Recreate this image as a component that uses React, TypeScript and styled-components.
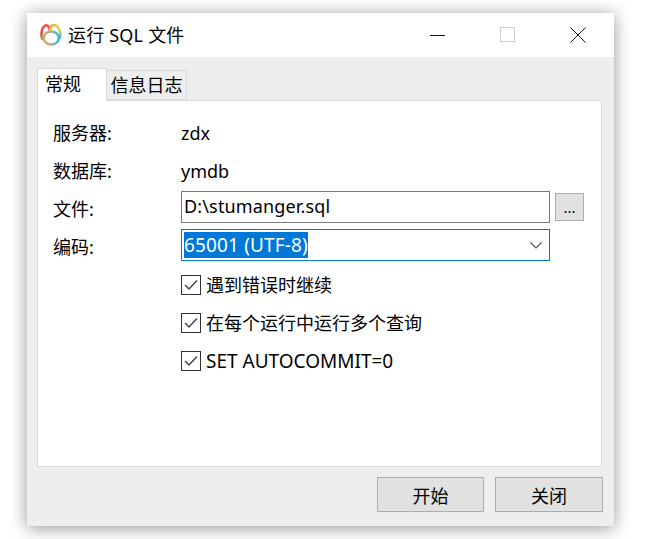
import React from 'react';
import styled, { createGlobalStyle } from 'styled-components';

const GlobalStyle = createGlobalStyle`
    html, body {
        margin: 0;
        padding: 0;
        background: #fff;
        font-family: "Noto Sans", "Noto Sans CJK SC", sans-serif;
    }
`;

// rainbow logo: two lobes sitting on a ring
const AppIcon = () => (
    <svg width="24" height="24" viewBox="0 0 24 24" fill="none" strokeWidth="2.5" strokeLinecap="round">
        <defs>
            <linearGradient id="lobeLeft" x1="0" y1="0" x2="0" y2="1">
                <stop offset="0" stopColor="#f0584a" />
                <stop offset="0.6" stopColor="#e8413f" />
                <stop offset="1" stopColor="#5fbf7a" />
            </linearGradient>
            <linearGradient id="lobeRight" x1="0" y1="0" x2="1" y2="1">
                <stop offset="0" stopColor="#f0a030" />
                <stop offset="0.6" stopColor="#d8d860" />
                <stop offset="1" stopColor="#4fc4c0" />
            </linearGradient>
            <linearGradient id="ring" x1="0" y1="0" x2="1" y2="0">
                <stop offset="0" stopColor="#d9a860" />
                <stop offset="0.5" stopColor="#a8b090" />
                <stop offset="1" stopColor="#35b4e4" />
            </linearGradient>
        </defs>
        <path d="M3 16 C1.5 10 3 4 6.5 2.5 C9 1.8 10.5 4 10.8 8" stroke="url(#lobeLeft)" />
        <path d="M10.8 8 C11 4 12.8 1.5 15.5 2 C19.5 3 22.5 9 21 15" stroke="url(#lobeRight)" />
        <ellipse cx="12.2" cy="15" rx="7.6" ry="6.6" stroke="url(#ring)" />
    </svg>
);

const CheckMark = () => (
    <svg width="14" height="12" viewBox="0 0 14 12" fill="none">
        <path d="M1 6 L5 10 L13 1.5" stroke="#444" strokeWidth="1.5" />
    </svg>
);

const options = [
    { text: '遇到错误时继续', latin: false },
    { text: '在每个运行中运行多个查询', latin: false },
    { text: 'SET AUTOCOMMIT=0', latin: true },
];

const App = (): JSX.Element => {
    return (
        <>
            <GlobalStyle />
            <Page>
                <Window>
                    <TitleBar>
                        <TitleLeft>
                            <AppIcon />
                            <TitleText>运行 SQL 文件</TitleText>
                        </TitleLeft>
                        <WindowControls>
                            <ControlButton>
                                <svg width="16" height="16" viewBox="0 0 16 16">
                                    <path d="M0 8.5 H15" stroke="#111" strokeWidth="1" />
                                </svg>
                            </ControlButton>
                            <ControlButton>
                                <svg width="16" height="16" viewBox="0 0 16 16" fill="none">
                                    <rect x="0.5" y="0.5" width="14" height="14" stroke="#ccc" strokeWidth="1" />
                                </svg>
                            </ControlButton>
                            <ControlButton>
                                <svg width="16" height="16" viewBox="0 0 16 16" fill="none">
                                    <path d="M0.5 0.5 L15.5 15.5 M15.5 0.5 L0.5 15.5" stroke="#111" strokeWidth="1" />
                                </svg>
                            </ControlButton>
                        </WindowControls>
                    </TitleBar>
                    <Body>
                        <TabStrip>
                            <Tab $active>常规</Tab>
                            <Tab>信息日志</Tab>
                        </TabStrip>
                        <Panel>
                            <InfoRow>
                                <Label>服务器:</Label>
                                <Value>zdx</Value>
                            </InfoRow>
                            <InfoRow>
                                <Label>数据库:</Label>
                                <Value>ymdb</Value>
                            </InfoRow>
                            <FileRow>
                                <RowLabel>文件:</RowLabel>
                                <FileInput>D:\stumanger.sql</FileInput>
                                <BrowseButton>...</BrowseButton>
                            </FileRow>
                            <EncodingRow>
                                <RowLabel>编码:</RowLabel>
                                <SelectBox>
                                    <Selected>65001 (UTF-8)</Selected>
                                    <svg width="12" height="7" viewBox="0 0 12 7" fill="none">
                                        <path d="M0.5 0.5 L6 6 L11.5 0.5" stroke="#555" strokeWidth="1.2" />
                                    </svg>
                                </SelectBox>
                            </EncodingRow>
                            <CheckList>
                                {options.map((option) => (
                                    <CheckRow key={option.text}>
                                        <CheckBox>
                                            <CheckMark />
                                        </CheckBox>
                                        <CheckText $latin={option.latin}>{option.text}</CheckText>
                                    </CheckRow>
                                ))}
                            </CheckList>
                        </Panel>
                        <Footer>
                            <FooterButton>开始</FooterButton>
                            <FooterButton $wide>关闭</FooterButton>
                        </Footer>
                    </Body>
                </Window>
            </Page>
        </>
    );
};

export default App;

const Page = styled.div`
    box-sizing: border-box;
    width: 646px;
    height: 539px;
    padding: 13px 0 13px 27px;
    overflow: hidden;
`;

const Window = styled.div`
    width: 587px;
    height: 513px;
    display: flex;
    flex-direction: column;
    background: #eee;
    box-shadow: 0 2px 16px rgba(0, 0, 0, 0.42);
    color: #000;
    font-size: 18px;
`;

const TitleBar = styled.div`
    height: 44px;
    flex-shrink: 0;
    display: flex;
    flex-direction: row;
    align-items: center;
    justify-content: space-between;
    background: #fff;
`;

const TitleLeft = styled.div`
    display: flex;
    flex-direction: row;
    align-items: center;
    gap: 5px;
    padding-left: 12px;
`;

const TitleText = styled.span`
    font-size: 18px;
    line-height: 24px;
    letter-spacing: 0.2px;
`;

const WindowControls = styled.div`
    display: flex;
    flex-direction: row;
    gap: 54px;
    padding-right: 28px;
`;

const ControlButton = styled.div`
    width: 16px;
    height: 16px;
    display: flex;
`;

const Body = styled.div`
    flex: 1;
    display: flex;
    flex-direction: column;
    padding: 12px 12px 14px 10px;
`;

const TabStrip = styled.div`
    height: 31px;
    display: flex;
    flex-direction: row;
    align-items: flex-end;
    position: relative;
    z-index: 1;
`;

const Tab = styled.div<{ $active?: boolean }>`
    box-sizing: border-box;
    height: ${(p) => (p.$active ? '33px' : '30px')};
    width: ${(p) => (p.$active ? '70px' : '80px')};
    margin-bottom: ${(p) => (p.$active ? '-1px' : '0')};
    display: flex;
    align-items: center;
    justify-content: ${(p) => (p.$active ? 'flex-start' : 'center')};
    background: ${(p) => (p.$active ? '#fff' : '#eee')};
    border: 1px solid #d9d9d9;
    border-bottom: ${(p) => (p.$active ? 'none' : '1px solid #d9d9d9')};
    border-left: ${(p) => (p.$active ? '1px solid #d9d9d9' : 'none')};
    font-size: 18px;
    line-height: 24px;
    padding: ${(p) => (p.$active ? '0 0 3px 7px' : '0')};
`;

const Panel = styled.div`
    box-sizing: border-box;
    width: 565px;
    height: 367px;
    padding: 18px 0 0 15px;
    display: flex;
    flex-direction: column;
    background: #fff;
    border: 1px solid #d9d9d9;
`;

const InfoRow = styled.div`
    height: 28px;
    margin-bottom: 10px;
    display: flex;
    flex-direction: row;
    align-items: center;
`;

const FileRow = styled.div`
    display: flex;
    flex-direction: row;
    align-items: center;
    height: 32px;
    margin-top: -4px;
`;

const EncodingRow = styled(FileRow)`
    margin-top: 6px;
`;

const Label = styled.div`
    width: 128px;
    flex-shrink: 0;
    line-height: 24px;
`;

const RowLabel = styled(Label)`
    padding-top: 4px;
`;

const Value = styled.div`
    line-height: 24px;
`;

const FileInput = styled.div`
    box-sizing: border-box;
    width: 369px;
    height: 32px;
    padding-left: 2px;
    border: 1px solid #7a7a7a;
    line-height: 29px;
    letter-spacing: 0.15px;
`;

const BrowseButton = styled.div`
    box-sizing: border-box;
    width: 29px;
    height: 28px;
    margin-left: 5px;
    display: flex;
    align-items: center;
    justify-content: center;
    background: #e1e1e1;
    border: 1px solid #adadad;
    font-size: 15px;
    line-height: 20px;
`;

const SelectBox = styled.div`
    box-sizing: border-box;
    width: 369px;
    height: 32px;
    padding: 0 7px 0 2px;
    display: flex;
    flex-direction: row;
    align-items: center;
    justify-content: space-between;
    border: 1px solid #0078d7;
`;

const Selected = styled.span`
    background: #0078d7;
    color: #fff;
    font-size: 19px;
    letter-spacing: 0.15px;
    line-height: 26px;
    height: 26px;
`;

const CheckList = styled.div`
    margin: 12px 0 0 128px;
    display: flex;
    flex-direction: column;
    gap: 14px;
`;

const CheckRow = styled.div`
    height: 24px;
    display: flex;
    flex-direction: row;
    align-items: center;
    gap: 5px;
    line-height: 24px;
`;

const CheckText = styled.span<{ $latin?: boolean }>`
    font-size: ${(p) => (p.$latin ? '19px' : '18px')};
`;

const CheckBox = styled.div`
    box-sizing: border-box;
    width: 20px;
    height: 20px;
    display: flex;
    align-items: center;
    justify-content: center;
    border: 1px solid #333;
    background: #fff;
`;

const Footer = styled.div`
    flex: 1;
    display: flex;
    flex-direction: row;
    align-items: flex-end;
    justify-content: flex-end;
    gap: 11px;
    margin-right: -1px;
`;

const FooterButton = styled.div<{ $wide?: boolean }>`
    box-sizing: border-box;
    width: ${(p) => (p.$wide ? '108px' : '107px')};
    height: 35px;
    display: flex;
    align-items: center;
    justify-content: center;
    background: #e1e1e1;
    border: 1px solid #adadad;
    font-size: 18px;
`;
